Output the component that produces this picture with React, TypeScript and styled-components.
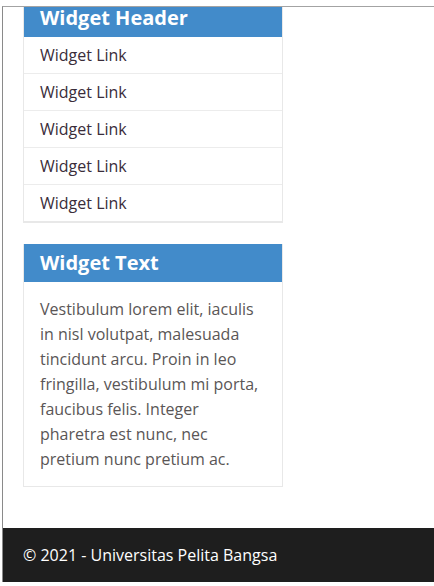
import React from "react";
import styled, { createGlobalStyle } from "styled-components";

const Global = createGlobalStyle`
  html, body { margin: 0; padding: 0; background: #ffffff; }
  body { font-family: "Open Sans", "Noto Sans", sans-serif; }
  #root { width: 434px; height: 586px; overflow: hidden; }
`;

const Page = styled.div`
  width: 434px;
  height: 586px;
  padding: 6px 0 0 2px;
  box-sizing: border-box;
  background: #ffffff;
`;

const Frame = styled.div`
  height: 575px;
  border-top: 1px solid #a3a3a3;
  border-left: 1px solid #8a8a8a;
  overflow: hidden;
  display: flex;
  flex-direction: column;
  background: #ffffff;
`;

const Sidebar = styled.div`
  width: 260px;
  margin: -8px 0 0 20px;
  display: flex;
  flex-direction: column;
  gap: 21px;
  flex: 1;
`;

const Widget = styled.section<{ $double?: boolean }>`
  border: 1px solid #e8e8e8;
  border-bottom-width: ${(p) => (p.$double ? "2px" : "1px")};
  border-top: none;
  background: #ffffff;
`;

const WidgetHeader = styled.h3`
  margin: 0;
  background: #428bca;
  color: #ffffff;
  font-family: "Open Sans", "Noto Sans", sans-serif;
  font-weight: 700;
  font-size: 20px;
  line-height: 38px;
  height: 38px;
  padding: 0 16px;
`;

const LinkList = styled.ul`
  list-style: none;
  margin: 0;
  padding: 0;
`;

const LinkItem = styled.li`
  border-bottom: 1px solid #ececec;
  padding: 8px 16px;
  &:last-child { border-bottom: none; }
`;

const WidgetLink = styled.a`
  font-size: 16px;
  line-height: 20px;
  color: #3a2d3a;
  text-decoration: none;
  display: block;
`;

const WidgetBody = styled.p`
  margin: 0;
  padding: 15px 16px 14px;
  font-size: 16px;
  line-height: 25px;
  color: #5a5656;
`;

const Footer = styled.footer`
  height: 54px;
  flex-shrink: 0;
  background: #1e1e1e;
  color: #ffffff;
  font-size: 16px;
  line-height: 54px;
  padding: 0 20px;
`;

const links = ["Widget Link", "Widget Link", "Widget Link", "Widget Link", "Widget Link"];

export default function App() {
  return (
    <>
      <Global />
      <Page>
        <Frame>
          <Sidebar>
            <Widget $double>
              <WidgetHeader>Widget Header</WidgetHeader>
              <LinkList>
                {links.map((l, i) => (
                  <LinkItem key={i}>
                    <WidgetLink href="#">{l}</WidgetLink>
                  </LinkItem>
                ))}
              </LinkList>
            </Widget>
            <Widget>
              <WidgetHeader>Widget Text</WidgetHeader>
              <WidgetBody>
                Vestibulum lorem elit, iaculis in nisl volutpat, malesuada tincidunt arcu. Proin in leo
                fringilla, vestibulum mi porta, faucibus felis. Integer pharetra est nunc, nec pretium
                nunc pretium ac.
              </WidgetBody>
            </Widget>
          </Sidebar>
          <Footer>© 2021 - Universitas Pelita Bangsa</Footer>
        </Frame>
      </Page>
    </>
  );
}
